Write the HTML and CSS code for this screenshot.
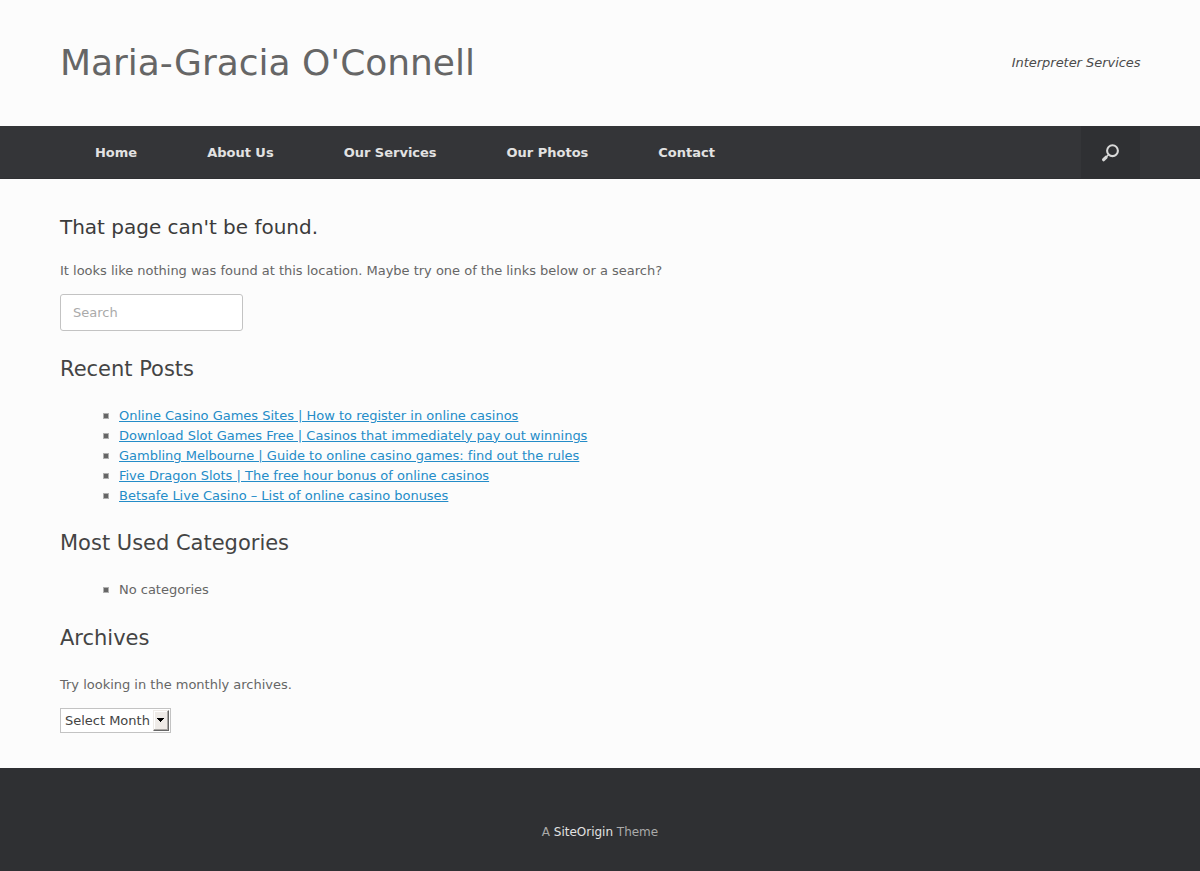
FILE: index.html
```html
<!DOCTYPE html>
<html lang="en">
<head>
<meta charset="utf-8">
<title>Page not found - Maria-Gracia O'Connell</title>
<link rel="stylesheet" href="styles.css">
</head>
<body>
<header class="masthead">
  <div class="container masthead-inner">
    <h1 class="site-title">Maria-Gracia O'Connell</h1>
    <div class="tagline">Interpreter Services</div>
  </div>
</header>
<nav class="main-nav">
  <div class="container nav-inner">
    <ul class="menu">
      <li><a>Home</a></li>
      <li><a>About Us</a></li>
      <li><a>Our Services</a></li>
      <li><a>Our Photos</a></li>
      <li><a>Contact</a></li>
    </ul>
    <div class="search-icon">
      <svg width="18" height="18" viewBox="0 0 18 18" fill="none" stroke="#d8d8d8"><circle cx="11.5" cy="6.7" r="5.4" stroke-width="2.1"/><path d="M7.4 10.8L5.5 12.7" stroke-width="1.6"/><path d="M5 13.3L2.6 15.7" stroke-width="3.2" stroke-linecap="round"/></svg>
    </div>
  </div>
</nav>
<main class="container content">
  <h2 class="entry-title">That page can't be found.</h2>
  <p class="text">It looks like nothing was found at this location. Maybe try one of the links below or a search?</p>
  <input class="search-field" type="text" placeholder="Search">
  <h3 class="widget-title">Recent Posts</h3>
  <ul class="list">
    <li><a>Online Casino Games Sites | How to register in online casinos</a></li>
    <li><a>Download Slot Games Free | Casinos that immediately pay out winnings</a></li>
    <li><a>Gambling Melbourne | Guide to online casino games: find out the rules</a></li>
    <li><a>Five Dragon Slots | The free hour bonus of online casinos</a></li>
    <li><a>Betsafe Live Casino – List of online casino bonuses</a></li>
  </ul>
  <h3 class="widget-title">Most Used Categories</h3>
  <ul class="list"><li>No categories</li></ul>
  <h3 class="widget-title">Archives</h3>
  <p class="text">Try looking in the monthly archives.</p>
  <div class="select"><span class="select-label">Select Month</span><span class="select-button"><svg width="7" height="4" viewBox="0 0 7 4" shape-rendering="crispEdges"><path d="M0 0h7v1H6v1H5v1H4v1H3V3H2V2H1V1H0z" fill="#000"/></svg></span></div>
</main>
<footer class="footer">A <a>SiteOrigin</a> Theme</footer>
</body>
</html>
```
FILE: styles.css
```css
* { box-sizing: border-box; }
body { margin: 0; background: #fcfcfc; color: #666; font: 13px/20px "DejaVu Sans", sans-serif; letter-spacing: -0.01px; height: 871px; display: flex; flex-direction: column; }
h1, h2, h3, p, ul { margin: 0; padding: 0; font-weight: 400; }
.container { width: 1080px; margin: 0 auto; }
.masthead { height: 126px; }
.masthead-inner { height: 125px; display: flex; align-items: center; justify-content: space-between; }
.site-title { font-size: 36px; line-height: 36px; letter-spacing: -0.03px; color: #666; }
.tagline { font-style: italic; letter-spacing: -0.04px; color: #4b4b4b; margin-right: -0.5px; }
.main-nav { height: 53px; background: #343538; border-bottom: 1px solid #2f3033; }
.nav-inner { height: 53px; display: flex; justify-content: space-between; }
.menu { display: flex; list-style: none; }
.menu a { display: block; padding: 0 35px; line-height: 53px; font-weight: 700; letter-spacing: -0.01px; color: #e2e2e2; }
.search-icon { width: 59px; background: #2f3033; display: flex; align-items: center; justify-content: center; padding-right: 1px; }
.content { height: 589px; padding-top: 38px; }
.entry-title { font-size: 20px; line-height: 20px; color: #3b3b3b; margin-bottom: 24px; }
.text { margin-bottom: 13px; }
.search-field { display: block; width: 183px; height: 37px; margin: 0; padding: 0 12px; border: 1px solid #c3c3c3; border-radius: 3px; background: #fff; font: inherit; }
.search-field::placeholder { color: #aaa; opacity: 1; }
.widget-title { font-size: 21px; line-height: 25px; color: #444; margin: 25.6px 0 24px; }
.list { padding-left: 59px; list-style: none; }
.list li::before { content: ""; float: left; width: 4px; height: 4px; margin: 7.2px 0 0 -16px; border: 1px solid rgba(102, 102, 102, 0.5); background: #666 padding-box; }
.list a { color: #248cc8; text-decoration: underline; }
.select { width: 111px; height: 25px; border: 1px solid #c3c3c3; background: #fff; color: #444; padding: 1px 1px 1px 4px; display: flex; align-items: center; justify-content: space-between; }
.select-label { padding-top: 1px; }
.select-button { width: 16px; height: 21px; background: #efebe7; border: 1px solid; border-color: #efebe7 #666 #666 #efebe7; box-shadow: inset -1px -1px #aaa7a4, inset 1px 1px #fff; display: flex; align-items: center; justify-content: center; padding-right: 1px; }
.footer { height: 103px; background: #2f3033; color: #aaa; font-size: 12px; text-align: center; padding-top: 54px; }
.footer a { color: #e2e2e2; }
```
